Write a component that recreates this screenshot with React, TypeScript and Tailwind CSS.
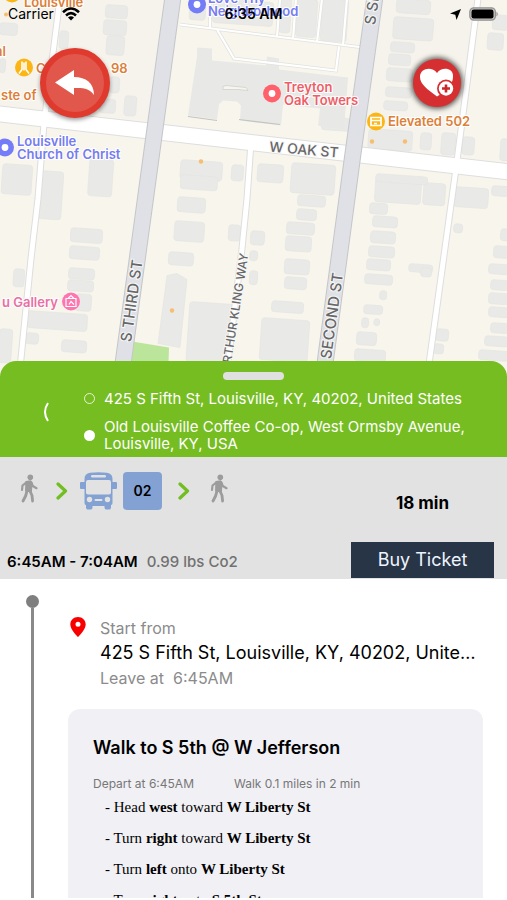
import React from 'react';

type Block = [number, number, number, number];

const blocks: Block[] = [
  [106, 6, 22, 13], [104, 21, 23, 15], [107, 37, 18, 19], [60, 32, 9, 18], [110, 78, 10, 16], [125, 97, 12, 20], [100, 100, 16, 14],
  [0, 24, 18, 12], [0, 60, 6, 14], [190, 6, 16, 15], [214, 0, 60, 24], [281, 0, 11, 34], [298, 0, 20, 38], [323, 0, 26, 42],
  [397, 0, 34, 14], [394, 18, 40, 22], [391, 43, 24, 10], [389, 55, 22, 11], [387, 69, 26, 13], [386, 88, 26, 10], [384, 102, 24, 9],
  [369, 130, 44, 20], [421, 134, 11, 17], [442, 134, 14, 22], [463, 138, 12, 18], [488, 34, 16, 17], [493, 16, 16, 15], [501, 140, 10, 22],
  [3, 165, 30, 30], [41, 172, 23, 48], [90, 160, 24, 37], [181, 161, 42, 19], [232, 166, 12, 16],
  [181, 176, 37, 14], [178, 198, 28, 15], [175, 222, 30, 20], [169, 253, 25, 13], [229, 226, 12, 16],
  [71, 229, 32, 14], [70, 247, 30, 13], [69, 269, 26, 11], [68, 281, 26, 11], [76, 295, 16, 17], [28, 312, 60, 17], [26, 334, 13, 11],
  [62, 341, 25, 12], [0, 330, 13, 34], [14, 270, 11, 18], [190, 303, 44, 60],
  [258, 165, 26, 18], [292, 164, 44, 30], [298, 196, 28, 11], [297, 210, 20, 11], [287, 223, 28, 12], [286, 237, 26, 15],
  [285, 260, 25, 15], [285, 278, 22, 12], [272, 302, 32, 11], [262, 319, 48, 42], [251, 232, 14, 14], [250, 252, 8, 10], [250, 272, 8, 14],
  [376, 178, 46, 25], [424, 184, 22, 22], [455, 188, 34, 20], [492, 187, 18, 10],
  [370, 204, 18, 11], [373, 217, 25, 11], [371, 232, 25, 12], [369, 247, 26, 11], [367, 260, 24, 11], [365, 275, 28, 10],
  [380, 292, 7, 9], [364, 306, 19, 9], [362, 319, 7, 10], [374, 320, 6, 7], [357, 333, 20, 13], [355, 350, 31, 12],
  [409, 265, 24, 8], [421, 269, 11, 9], [454, 225, 9, 9], [436, 330, 13, 12], [434, 345, 10, 10],
  [501, 230, 10, 12], [494, 247, 16, 12], [489, 265, 20, 10], [491, 281, 18, 10], [489, 294, 20, 11], [489, 308, 20, 10], [491, 324, 18, 10], [485, 337, 24, 10], [479, 351, 30, 10],
  [376, 175, 52, 8], [322, 118, 28, 13],
];

function MapView() {
  return (
    <svg
      className="absolute inset-0 h-full w-full font-['Inter',sans-serif]"
      viewBox="0 0 507 380"
      preserveAspectRatio="xMidYMid slice"
      role="img"
      aria-label="Map of Old Louisville"
    >
      <rect width="507" height="380" fill="#f8f5ec" />
      <path d="M0 0h60L45 112 0 108zM64 0h99l-14 123-98-11zM382 0h93l-18 160-94-11z" fill="#f5f3eb" />
      <g fill="#e9e9e7" stroke="#e3e3e0" strokeWidth="0.6">
        {blocks.map(([x, y, w, h], i) => (
          <rect key={i} x={x} y={y} width={w} height={h} rx="3" transform={`rotate(4 ${x} ${y})`} />
        ))}
        <path d="M167 277l10-2 10 6-7 68-22-4z" />
      </g>
      <path d="M197 49l15 1v12l54 5 1-9 12 2v11l69 8-4 52-26-4 2-17-37-4-2 21-41-5 1-15-4-4-14-1-4 4-2 15-29-4 9-59z" fill="#e8e8e6" strokeLinejoin="round" />
      <path d="M188 118l29 4M239 121l41 5" fill="none" stroke="#c3c3bf" strokeWidth="1.2" />
      <path d="M223 91v-3l3-1 20 2 2 3-10-1z" fill="#f7f5ee" stroke="#cfcfcb" strokeWidth="0.8" />
      <path d="M132 343l37 6-1 31h-40z" fill="#bce59c" />
      <g fill="none" stroke="#e1e1de" strokeWidth="3.6">
        <path d="M180 26l160 20 23 3M217 31l17 29 102 12 3-24M210 0v29M280 0l-3 38M296 0l-3 41M322 0l-5 44M347 0l-4 47" />
      </g>
      <g fill="none" stroke="#fff" strokeWidth="2.2">
        <path d="M180 26l160 20 23 3M217 31l17 29 102 12 3-24M210 0v29M280 0l-3 38M296 0l-3 41M322 0l-5 44M347 0l-4 47" />
      </g>
      <g fill="none" stroke="#dedede" strokeWidth="7">
        <path d="M60 0L44 125 38 200 31 260 19 380M251 144l-4 56-5 50-16 130M478 0l-22 170-29 210" />
        <path d="M-5 115l520 59" strokeWidth="17" />
      </g>
      <g fill="none" stroke="#fff" strokeWidth="5">
        <path d="M60 0L44 125 38 200 31 260 19 380M251 144l-4 56-5 50-16 130M478 0l-22 170-29 210" />
        <path d="M-5 115l520 59" strokeWidth="15" />
      </g>
      <g fill="none" stroke="#c5c6c9" strokeWidth="17">
        <path d="M173 -2L155 130 121 380M375 -2L353 155 323 380" />
      </g>
      <g fill="none" stroke="#dfe1e6" strokeWidth="15">
        <path d="M173 -2L155 130 121 380M375 -2L353 155 323 380" />
      </g>
      <g fill="#f7bd70">
        <circle cx="201" cy="163" r="2.2" /><circle cx="172" cy="312" r="2.2" />
        <circle cx="372" cy="143" r="2.2" /><circle cx="405" cy="143" r="2.2" /><circle cx="6" cy="16" r="2" />
      </g>
      <g fill="#67676a" stroke="#f7f7f5" strokeWidth="2" paintOrder="stroke" fontWeight="500">
        <text x="269" y="153" fontSize="14" transform="rotate(5 269 153)">W OAK ST</text>
        <text x="131" y="344" fontSize="15" transform="rotate(-82 131 344)">S THIRD ST</text>
        <text x="331" y="361" fontSize="15" transform="rotate(-82 331 361)">SECOND ST</text>
        <text x="231" y="365" fontSize="12" transform="rotate(-81 231 365)">RTHUR KLING WAY</text>
        <text x="375" y="27" fontSize="15" transform="rotate(-82 375 27)">S SECOND ST</text>
      </g>
      <g fontSize="13" fontWeight="600" stroke="#fff" strokeWidth="2" paintOrder="stroke">
        <g fill="#dc7f38">
          <text x="24" y="8">Louisville</text><text x="-5" y="57">al</text>
          <text x="36" y="74">C</text><text x="111" y="74">98</text><text x="1" y="101">ste of</text>
          <text x="388" y="127">Elevated 502</text>
        </g>
        <g fill="#747cf0">
          <text x="17" y="147">Louisville</text><text x="17" y="160">Church of Christ</text>
          <text x="208" y="4">Love Thy</text><text x="208" y="17">Neighborhood</text>
        </g>
        <g fill="#ed5e67"><text x="284" y="93">Treyton</text><text x="284" y="106">Oak Towers</text></g>
        <text x="2" y="308" fill="#e96fa4">u Gallery</text>
      </g>
      <g>
        <circle cx="12" cy="-5" r="9" fill="#fbb615" /><circle cx="24" cy="69" r="9" fill="#fbb615" />
        <path d="M22 63v8l-3 4M26 63v8l3 4M24 64v8" fill="none" stroke="#fff" strokeWidth="1.6" />
        <circle cx="376" cy="123" r="9" fill="#fbb615" />
        <path d="M371 119h10v8h-10zM371 122h10M374 125h3" fill="none" stroke="#fff" strokeWidth="1.7" />
        <circle cx="5" cy="149" r="9" fill="#747cf8" /><circle cx="5" cy="149" r="3.4" fill="#fff" />
        <circle cx="197" cy="6" r="9" fill="#747cf8" /><circle cx="197" cy="6" r="3.4" fill="#fff" />
        <circle cx="272" cy="95" r="9" fill="#ff606b" /><circle cx="272" cy="95" r="3.4" fill="#fff" />
        <circle cx="71" cy="303" r="9" fill="#ff75b0" />
        <path d="M66 300h10v8H66zM68 300l3-3 3 3M69 306l2-3 3 3" fill="none" stroke="#fff" strokeWidth="1.2" />
      </g>
    </svg>
  );
}

function StatusBar() {
  return (
    <div className="relative grid grid-cols-3 items-center px-2 pt-1 text-sm leading-5 text-black">
      <div className="flex items-center gap-2">
        <span>Carrier</span>
        <svg width="18" height="14" viewBox="0 0 18 14" fill="none" stroke="#000" strokeWidth="2.6" aria-label="Wi-Fi">
          <path d="M1 5.2Q9-2.2 17 5.2M4 8.4Q9 4 14 8.4" />
          <path d="M6 10.4Q9 8.2 12 10.4L9 13.5z" fill="#000" stroke="none" />
        </svg>
      </div>
      <span className="text-center font-semibold">6:35 AM</span>
      <div className="flex items-center justify-end gap-2">
        <svg width="11" height="11" viewBox="0 0 11 11" aria-label="Location in use"><path d="M11 0L6.5 11 5.3 5.7 0 4.5z" /></svg>
        <svg width="30" height="14" viewBox="0 0 30 14" aria-label="Battery full">
          <rect x="0.8" y="0.8" width="25.6" height="12.4" rx="4" fill="#c7c5c0" stroke="#929292" strokeWidth="1.2" />
          <rect x="2.5" y="2.5" width="22" height="9" rx="2.2" />
          <path d="M27.5 4.5q2.5 2.5 0 5z" fill="#8b8b8b" />
        </svg>
      </div>
    </div>
  );
}

function WalkIcon() {
  return (
    <svg width="18" height="29" viewBox="0 0 18 29" className="shrink-0 text-[#9c9c9c]" fill="none" stroke="currentColor" strokeLinecap="round" strokeLinejoin="round" aria-label="Walk">
      <circle cx="10.3" cy="3.2" r="2.8" fill="currentColor" stroke="none" />
      <path d="M6 7.8l4.5-.8 1.5 2-.8 8.500-5.400-.5z" fill="currentColor" strokeWidth="1.4" />
      <path d="M6.500 8.300L2.500 11.500 2 16M11.300 8.500l1.500 3.500 3.700 2.200" strokeWidth="2.200" />
      <path d="M7 17L5.600 22 3 27M10 17l2 4.500.6 5.500" strokeWidth="2.800" />
    </svg>
  );
}

function StepArrow() {
  return (
    <svg width="12" height="18" viewBox="0 0 12 18" className="shrink-0" fill="none" stroke="#72bd20" strokeWidth="3.2" aria-hidden="true">
      <path d="M2 2l7.500 7L2 16" strokeLinejoin="round" strokeLinecap="round" />
    </svg>
  );
}

function BusIcon() {
  return (
    <svg width="37" height="38" viewBox="0 0 37 38" className="shrink-0" aria-label="Bus">
      <path d="M10 .8q8.500-1.200 17 0 5.500.8 5.500 6.200v3H36q1 0 1 1v5q0 1-1 1h-3.500v14q0 2-1.500 2v2.500q0 2-2 2h-2.500q-2 0-2-2V34h-12v1.500q0 2-2 2H8q-2 0-2-2V33q-1.500 0-1.500-2V17H1q-1 0-1-1v-5q0-1 1-1h3.500V7Q4.500 1.600 10 .8z" fill="#83a2d3" />
      <rect x="11" y="3" width="15" height="2.500" rx="1.200" fill="#e2e2e2" />
      <rect x="6" y="8" width="25" height="14.500" rx="2" fill="#e2e2e2" />
      <circle cx="9.500" cy="27.500" r="2.700" fill="#e2e2e2" /><circle cx="27.500" cy="27.500" r="2.700" fill="#e2e2e2" />
      <rect x="14.500" y="27" width="8" height="2" rx="1" fill="#e2e2e2" />
    </svg>
  );
}

const directions = [
  { verb: 'Head', turn: 'west', link: 'toward', street: 'W Liberty St' },
  { verb: 'Turn', turn: 'right', link: 'toward', street: 'W Liberty St' },
  { verb: 'Turn', turn: 'left', link: 'onto', street: 'W Liberty St' },
  { verb: 'Turn', turn: 'right', link: 'onto', street: 'S 5th St' },
];

export default function App() {
  return (
    <main className="flex h-screen flex-col overflow-hidden bg-white pb-0.5 font-['Inter',sans-serif] text-black">
      <section className="relative -mb-4 h-[377px] shrink-0 overflow-hidden">
        <MapView />
        <StatusBar />
        <div className="relative flex items-center justify-between pt-6 pr-[46px] pl-10">
          <button type="button" aria-label="Back" className="flex size-[70px] items-center justify-center rounded-full border-[6px] border-[#e0392d] bg-[#e2574c] shadow-[0_2px_4px_#0006]">
            <svg width="40" height="26" viewBox="0 0 40 26" fill="#fff" aria-hidden="true">
              <path d="M0 12.500L19 0v7c12 0 20 6 20 18-4-6-10-7.500-20-7v7z" />
            </svg>
          </button>
          <button type="button" aria-label="Add to favorites" className="flex size-12 items-center justify-center rounded-full bg-[#d62f32] shadow-[0_0_5px_2px_#0009]">
            <svg width="34" height="30" viewBox="0 0 34 30" aria-hidden="true">
              <path d="M17 28.500C7 21 0 16 0 9 0 0 12-2 17 5 22-2 34 0 33 9c0 7-6 14-16 19.500z" fill="#fff" />
              <circle cx="26" cy="20.500" r="9" fill="#d62f32" />
              <circle cx="26" cy="20.500" r="7.200" fill="#fff" />
              <path d="M26 16.500v8M22 20.500h8" stroke="#c92729" strokeWidth="2.600" />
            </svg>
          </button>
        </div>
      </section>

      <header className="relative flex h-24 shrink-0 flex-col rounded-t-2xl bg-[#76bd22] pt-[11px] text-white">
        <div className="mx-auto h-2 w-[61px] shrink-0 rounded-sm bg-[#e0e0e0]" />
        <div className="flex items-start">
          <button type="button" aria-label="Previous" className="mt-3 ml-10 flex h-10 w-3 items-center justify-center">
            <svg width="6" height="20" viewBox="0 0 6 20" fill="none" stroke="#fff" strokeWidth="2" aria-hidden="true"><path d="M5 1Q-1 10 5 19" /></svg>
          </button>
          <div className="ml-8 flex flex-1 flex-col gap-[11px] pt-[10px] pr-8 text-[15px] leading-[17px]">
            <div className="flex items-center gap-[9px]">
              <span className="size-[11px] shrink-0 rounded-full border border-white/80" />
              <p>425 S Fifth St, Louisville, KY, 40202, United States</p>
            </div>
            <div className="flex items-center gap-[9px]">
              <span className="size-[11px] shrink-0 rounded-full bg-white" />
              <p>Old Louisville Coffee Co-op, West Ormsby Avenue, Louisville, KY, USA</p>
            </div>
          </div>
        </div>
      </header>

      <section className="flex h-[122px] shrink-0 justify-between bg-[#e2e2e2]">
        <div className="flex flex-col justify-between pt-[15px] pb-[7px]">
          <div className="flex items-center pl-5">
            <div className="-mt-1.5"><WalkIcon /></div>
            <div className="ml-[18px]"><StepArrow /></div>
            <div className="ml-3"><BusIcon /></div>
            <span className="ml-1.5 flex h-[38px] w-[39px] items-center justify-center rounded-sm bg-[#83a2d3] text-sm font-semibold">02</span>
            <div className="mr-5 ml-4"><StepArrow /></div>
            <div className="-mt-1.5"><WalkIcon /></div>
          </div>
          <p className="flex gap-[9px] pl-[7px] text-[15px] leading-5">
            <span className="font-semibold">6:45AM - 7:04AM</span>
            <span className="font-medium text-[#717171]">0.99 lbs Co2</span>
          </p>
        </div>
        <div className="mr-[13px] flex w-[143px] flex-col justify-between pt-9 pb-px">
          <p className="text-center text-[17px] leading-5 font-bold">18 min</p>
          <button type="button" className="h-9 bg-[#283547] text-lg text-[#eef4ff]">Buy Ticket</button>
        </div>
      </section>

      <section className="flex min-h-0 flex-1 overflow-hidden pl-[26px]">
        <div className="flex w-[13px] shrink-0 flex-col items-center pt-4">
          <span className="size-[13px] shrink-0 rounded-full bg-[#7f7f7f]" />
          <span className="w-[3px] flex-1 bg-[#898989]" />
        </div>
        <div className="ml-[29px] min-w-0 flex-1 pr-6">
          <div className="flex gap-[13px] pt-9 pl-px">
            <svg width="18" height="24" viewBox="0 0 18 24" className="shrink-0" aria-hidden="true">
              <path d="M9 2C4.500 2 1.300 5.200 1.300 9.500 1.300 15 9 22 9 22s7.700-7 7.700-12.500C16.700 5.200 13.500 2 9 2zm0 4.800a2.500 2.500 0 110 5 2.500 2.500 0 010-5z" fill="#f90000" />
            </svg>
            <div className="min-w-0 flex-1 pt-0.5 pr-1 text-base leading-[22px] text-[#8b8b8b]">
              <p>Start from</p>
              <h1 className="truncate text-lg leading-7 text-black">425 S Fifth St, Louisville, KY, 40202, United States</h1>
              <p className="whitespace-pre">Leave at  6:45AM</p>
            </div>
          </div>
          <article className="mt-5 rounded-xl bg-[#f1f0f5] px-[25px] pt-[27px] pb-6">
            <h2 className="text-lg leading-6 font-semibold">Walk to S 5th @ W Jefferson</h2>
            <div className="mt-4 flex gap-10 text-xs leading-4 text-[#777]">
              <span>Depart at 6:45AM</span>
              <span>Walk 0.1 miles in 2 min</span>
            </div>
            <ul className="pl-3 font-['Liberation_Serif',serif] text-[15px] leading-[31px]">
              {directions.map((step, i) => (
                <li key={i}>- {step.verb} <b>{step.turn}</b> {step.link} <b>{step.street}</b></li>
              ))}
            </ul>
          </article>
        </div>
      </section>
    </main>
  );
}
